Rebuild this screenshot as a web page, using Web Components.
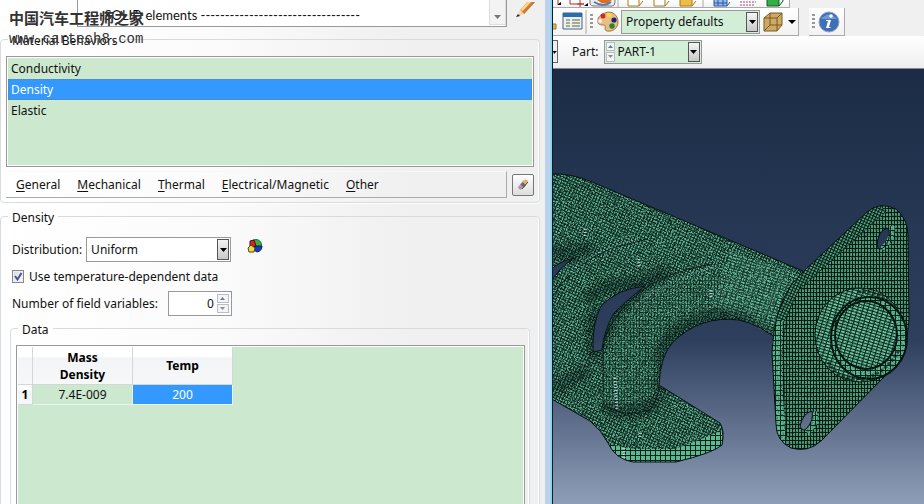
<!DOCTYPE html>
<html lang="en">
<head>
<meta charset="utf-8">
<title>Material editor</title>
<style>
html,body{height:100%}
body{margin:0;overflow:hidden;font:12px/16px "Noto Sans","Open Sans",sans-serif;color:#111;
 --field:#cce8cf;--select:#3399ff;--line:#a9a9a9;--soft:#d5dce0}
</style>
</head>
<body>
<cae-app></cae-app>
<script>
const define=(name,html,setup)=>customElements.define(name,class extends HTMLElement{
  constructor(){
    super();
    const t=document.createElement('template');
    t.innerHTML='<style>*{box-sizing:border-box}button,input,select,textarea{font:inherit;color:inherit;margin:0}:host{display:block}</style>'+html;
    this.attachShadow({mode:'open'}).append(t.content.cloneNode(true));
    if(setup) setup(this,this.shadowRoot);
  }
});
const q=(r,s)=>r.querySelector(s);

/* Titled frame */
define('cae-group',`<style>
fieldset{margin:0;min-width:0;border:1px solid var(--soft);border-radius:4px;padding:var(--pad,0);box-shadow:inset 1px 0 #fff,inset -1px 0 #fff,0 1px #fff}
legend{padding:4px 4px 0;margin-left:var(--legend,2px);line-height:16px}
</style><fieldset><legend></legend><slot></slot></fieldset>`,(h,r)=>{q(r,'legend').textContent=h.getAttribute('title-text')});

/* Drop-down with its label */
define('cae-select',`<style>
:host{display:flex;align-items:center}
label{padding-right:var(--label-gap,4px);white-space:nowrap}label:empty{display:none}
.box{display:grid;grid-template-columns:auto 1fr 12px;width:var(--w);height:var(--h,25px);border:1px solid #999;padding:1px;background:var(--bg,#fff)}
select{grid-area:1/1/2/4;appearance:none;border:0;background:none;width:100%;padding:0 16px 0 var(--text-pad,3px);outline:0;font-size:var(--size,12px)}
.arrow{grid-area:1/3;pointer-events:none;border:1px solid #555;background:linear-gradient(#f4f4f4,#c9c9c9);display:grid;place-items:center}
slot{display:contents}
::slotted(cae-spin){grid-area:1/1;z-index:1}
</style><label for="s"></label><div class="box"><slot></slot><select id="s"><option></option></select><span class="arrow"><svg width="7" height="4"><path d="M0 0h7L3.500 4z"/></svg></span></div>`,(h,r)=>{
  q(r,'label').textContent=h.getAttribute('label')||'';
  q(r,'option').textContent=h.getAttribute('value');
  if(!h.getAttribute('label')) q(r,'select').setAttribute('aria-label',h.getAttribute('name'));
});

define('cae-spin',`<style>
:host{display:flex;flex-direction:column;gap:1px;width:var(--spin,12px)}
button{flex:1;min-height:0;padding:0;border:1px solid #b9bec6;background:#f3f4f6;display:grid;place-items:center}
</style><button aria-label="Increase"><svg width="5" height="3"><path d="M0 3h5L2.500 0z" fill="#6876a5"/></svg></button><button aria-label="Decrease"><svg width="5" height="3"><path d="M0 0h5L2.500 3z" fill="#8a8a8a"/></svg></button>`);

define('cae-check',`<style>
:host,label{display:flex;align-items:center}label{gap:5px}
.b{display:grid;width:12px;height:13px}.b>*{grid-area:1/1}
input{appearance:none;width:12px;height:13px;border:1px solid #888;background:linear-gradient(135deg,#d5d9df,#fff);box-shadow:inset 0 0 0 1px #eee}
svg{pointer-events:none}
</style><label><span class="b"><input type="checkbox" checked><svg width="12" height="13"><path d="M3 6l2.500 3.500L9.500 3" fill="none" stroke="#45549b" stroke-width="2"/></svg></span><slot></slot></label>`);

define('cae-number',`<style>
:host{display:flex;align-items:center;gap:10px}
.box{display:flex;width:64px;height:25px;border:1px solid #999;background:#fff;padding:2px}
input{border:0;background:none;flex:1;min-width:0;text-align:right;padding:0 3px 0 0;outline:0}
</style><label for="n">Number of field variables:</label><div class="box"><input id="n" value="0"><cae-spin></cae-spin></div>`);

define('cae-behaviors',`<style>
div{border:1px solid #999;box-shadow:inset 0 0 0 1px #fff;background:var(--field);height:111px;padding:1px}
button{display:block;width:100%;height:21px;border:0;background:none;text-align:left;padding:0 3px}
[aria-selected=true]{background:var(--select);color:#fff;outline:1px dotted #66809a;outline-offset:-1px}
</style><div role="listbox" aria-label="Material Behaviors"><button role="option">Conductivity</button><button role="option" aria-selected="true">Density</button><button role="option">Elastic</button></div>`);

define('cae-menu',`<style>
:host{display:flex;align-items:center;gap:5px;margin-top:4px}
nav{flex:1;display:flex;gap:17px;height:27px;padding-left:10px;border-right:1px solid #aaa;border-bottom:1px solid #aaa;border-top:1px solid #f8f8f8}
button{border:0;background:none;padding:0;text-underline-offset:2px}
.erase{width:22px;height:22px;border:1px solid #777;border-radius:2px;background:linear-gradient(#fff,#ddd);display:grid;place-items:center}
</style><nav><button><u>G</u>eneral</button><button><u>M</u>echanical</button><button><u>T</u>hermal</button><button><u>E</u>lectrical/Magnetic</button><button><u>O</u>ther</button></nav>
<button class="erase" aria-label="Delete behavior"><svg width="14" height="14"><path d="M2 9L8 2q3-1 4 2l-6 7q-3 2-4-2z" fill="#b992ab"/><path d="M5.500 5L8 2q3-1 4 2L9.500 7.500z" fill="#e6b35e"/><path d="M4.500 6.500l2-2.500 3.500 3-2 2.500z" fill="#666b76"/><path d="M6 11l6-7" stroke="#5b4746"/></svg></button>`);

define('cae-data',`<style>
.box{border:1px solid #999;box-shadow:inset 0 0 0 1px #fff;background:var(--field);padding:1px;min-height:200px}
table{border-collapse:separate;border-spacing:0;table-layout:fixed;width:215px;line-height:17px}
th{font-weight:700;background:linear-gradient(#fff 25%,#f3f4f6 30%,#f6f7f8);border-right:1px solid #d4d6d8;border-bottom:1px solid #d4d6d8;padding:0;color:#000}
thead th{height:38px;padding:0}
td{text-align:center;height:20px;padding:0;border-right:1px solid #e8f5e9;border-bottom:1px solid #e8f5e9}
td.on{background:var(--select);color:#fff}
.n{width:15px}
</style><div class="box"><table><thead><tr><th class="n"></th><th>Mass<br>Density</th><th>Temp</th></tr></thead><tbody><tr><th>1</th><td>7.4E-009</td><td class="on">200</td></tr></tbody></table></div>`);

define('cae-description',`<style>
:host{display:flex;height:29px;padding-left:77px}
.box{flex:1;display:flex;height:27px;border:1px solid #999;border-top:0;background:#fff}
textarea{flex:1;min-width:0;height:24px;resize:none;border:0;outline:0;background:none;padding:7px 0 0 12px;font:13px/16px Lato,sans-serif;overflow:hidden;white-space:pre}
.bar{width:17px;height:25px;border:1px solid #ddd;border-top:0;background:#f3f3f3;padding:15px 0 0 4px}
.pen{border:0;background:none;padding:0;width:33px;height:20px}
svg{display:block}
</style><div class="box"><textarea aria-label="Description">---SOLID elements ---------------------------------</textarea><div class="bar"><svg width="7" height="4"><path d="M0 0h7L3.500 4z" fill="#777"/></svg></div></div>
<button class="pen" aria-label="Edit description"><svg width="33" height="16"><path d="M13 8L22-2h8L17 12z" fill="#eaa94e"/><path d="M15 10L27-2h3L17 12z" fill="#c9783a"/><path d="M13 8l4 4-7 3z" fill="#f4d5a8"/><path d="M11 12l2 2-4 1z" fill="#222"/><path d="M15 8L24-2" stroke="#ffd890" stroke-width="2"/></svg></button>`);

define('cae-editor',`<style>
:host{overflow:hidden;padding-right:4px;background:linear-gradient(90deg,#fff,#fbfbfb 40%,#f0f0f0 75%)}
.first{--pad:7px 5px 4px;--legend:2px;margin-bottom:3px}
.second{--pad:11px 9px 0;--legend:-2px}
.row{display:flex;align-items:flex-start;gap:16px;padding-left:2px}
cae-check{height:29px;padding:0 2px}
cae-number{padding-left:2px;margin-bottom:2px}
.data{--pad:7px 4px 0 5px;--legend:2px}
.color{border:0;background:none;padding:2px 0 0;width:16px}
</style><cae-description></cae-description>
<cae-group class="first" title-text="Material Behaviors"><cae-behaviors></cae-behaviors><cae-menu></cae-menu></cae-group>
<cae-group class="second" title-text="Density"><div class="row"><cae-select label="Distribution:" value="Uniform" style="--w:145px"></cae-select>
<button class="color" aria-label="Create field"><svg width="16" height="15"><circle cx="9" cy="6" r="5.500" fill="#36b33f" stroke="#173"/><path d="M8 7h7q0 5-5 6L7 11z" fill="#1438d8" stroke="#123"/><path d="M3 2l4-1 2 6-6 1z" fill="#d8261c" stroke="#411"/><path d="M1 9l3-3 4 3-1 4-5 0z" fill="#f1de3b" stroke="#442"/></svg></button></div>
<cae-check>Use temperature-dependent data</cae-check><cae-number></cae-number>
<cae-group class="data" title-text="Data"><cae-data></cae-data></cae-group></cae-group>`);

define('cae-watermark',`<style>
:host{position:absolute;left:9px;top:6px;pointer-events:none;color:#333;white-space:nowrap}
p{margin:0}
.cn{font:bold 15px/24px "Noto Sans CJK SC",sans-serif}
.url{font:14px/18px "Liberation Mono",monospace}
</style><p class="cn" lang="zh">中国汽车工程师之家</p><p class="url">www.cartech8.com</p>`);

define('cae-tools',`<style>
:host{background:#f0f0f0}
.r{display:flex;overflow:hidden}
button{border:0;background:none;padding:0;display:block}svg{display:block}
.g{display:flex;align-items:center;border-right:1px solid #aaa;border-bottom:1px solid #aaa;background:linear-gradient(#fff,#f2f2f2)}
.top{height:8px}.top .g{width:237px;height:8px}
.mid{height:28px;gap:10px}.mid .g{height:28px}
.grip{width:3px;height:15px;background:repeating-linear-gradient(#999 0 2px,transparent 2px 4px)}
.low{height:33px;align-items:center;background:linear-gradient(#fff,#eee);border-bottom:1px solid #888;gap:14px;padding-bottom:1px}
.cut{width:5px;height:23px;border:1px solid #666;border-left:0;background:#eee}
.cut svg{margin-top:10px}
.a{--w:139px;--h:24px;--bg:#d3eed7;--size:12px}
.b{--w:98px;--h:24px;--bg:#d3eed7;--text-pad:12px;--label-gap:5px;--spin:9px}
</style>
<div class="r top"><div class="g"><button aria-label="Model tools"><svg width="236" height="8"><g fill="none" stroke="#ad3426"><path d="M5 0v4M17 0v4h14M27 0v7M24 4h7"/></g><path d="M4 5l4-3v3zM31 6l4-3v3z"/><path d="M37 0v4q1 2 4 2h18q3 0 3-4V0" fill="#eee" stroke="#777"/><path d="M44 0q8 7 15 0z" fill="#e36c21"/><path d="M41 2q10 6 17 0" fill="none" stroke="#557cae" stroke-width="2"/><path d="M65 0v7M150 0v7" stroke="#aaa"/><g fill="#fff" stroke="#a97918"><path d="M75-3h11v9H75zM86 6l4-5M101-3h11v9h-11zM112 6l4-5"/><path d="M127-3h12v9h-12z" fill="#edbd49"/><path d="M139 6l4-5"/></g><path d="M161-3h13v9h-13zM165 0v6M170 0v6M161 3h13M174 6l3-4" fill="#97bdec" stroke="#2856a0"/><path d="M187 2h16M187 5h15" stroke="#a34b84" stroke-dasharray="2 1"/><path d="M214-3h12v9h-12zM226 6l4-5V0" fill="#35ae48" stroke="#165b24"/></svg></button></div></div>
<div class="r mid"><div class="g"><button aria-label="Tables"><svg width="37" height="24"><path d="M0 14h3v5H0" fill="#d9b25c" stroke="#9a7b3b"/><path d="M10 3h19v16H10z" fill="#eef1e8" stroke="#496580"/><path d="M10 3h19v4H10z" fill="#286eb1"/><path d="M13 10h4M13 13h4M13 16h4M19 10h8M19 13h8M19 16h8" stroke="#5a6356"/><path d="M33 0v24" stroke="#aaa"/></svg></button><span class="grip"></span>
<button aria-label="Color palette"><svg width="28" height="22"><path d="M12 2c7-3 13 2 13 9 0 6-5 10-11 9-4-1 0-5-3-6-3 0-7 0-6-5 0-3 3-6 7-7z" fill="#e9bd83" stroke="#a87539"/><circle cx="10" cy="5" r="2.500" fill="#c92c20"/><circle cx="16" cy="4" r="2.300" fill="#f2df42"/><circle cx="21" cy="9" r="2.600" fill="#17266f"/><circle cx="19" cy="15" r="2.700" fill="#228738"/><circle cx="7" cy="10" r="2" fill="#efefef"/></svg></button>
<cae-select class="a" name="Color coding" value="Property defaults"></cae-select>
<button aria-label="Wireframe view"><svg width="38" height="24"><path d="M4 8l6-5h12v12l-5 6H4z" fill="#cda967"/><path d="M4 8l6-5h12v12l-5 6H4zM4 8h13v13M17 8l5-5M10 3v12h12M4 21l6-6" fill="none" stroke="#7b5b1c"/><path d="M28 10h8l-4 4z"/></svg></button></div>
<div class="g"><span class="grip" style="margin-left:3px"></span><button aria-label="Information"><svg width="29" height="24"><circle cx="14" cy="12" r="10" fill="#3f6fb5" stroke="#8fa5c8"/><path d="M6 9q8-9 16 0" fill="#6f99d2"/><circle cx="16" cy="6" r="1.800" fill="#fff"/><path d="M11 10h5l-2 7h2l-1 1h-4l2-7h-2z" fill="#fff"/></svg></button></div></div>
<div class="r low"><span class="cut"><svg width="4" height="4"><path d="M0 0h4L1 3z"/></svg></span><cae-select class="b" label="Part:" value="PART-1"><cae-spin></cae-spin></cae-select></div>`);

/* Meshed manifold model */
define('cae-viewport',`<style>
:host{min-height:0;background:linear-gradient(#1c2c47,#22344f 25%,#2d3f5d 62%,#5b6b88 80%,#8f9eb8)}
svg{display:block;width:100%;height:100%}
</style><svg viewBox="553 69 371 435" preserveAspectRatio="xMinYMin slice" role="img" aria-label="Finite element mesh of an exhaust manifold">
<defs>
<pattern id="m1" width="3" height="3" patternUnits="userSpaceOnUse" patternTransform="rotate(25)"><path d="M0 0h3v3H0z" fill="#58b28a"/><path d="M0 .5h3M.5 0v3" stroke="#04150f" stroke-width="1.100"/></pattern>
<pattern id="m2" width="3" height="4" patternUnits="userSpaceOnUse"><path d="M0 0h3v4H0z" fill="#4f9f7b"/><path d="M0 .5h3M.5 0v4" stroke="#06180f"/></pattern>
<pattern id="m3" width="5" height="5" patternUnits="userSpaceOnUse"><path d="M0 0h5v5H0z" fill="#5bb890"/><path d="M0 .5h5M.5 0v5" stroke="#0a2018"/></pattern>
<pattern id="m4" width="5" height="3" patternUnits="userSpaceOnUse" patternTransform="rotate(17)"><path d="M0 0h5v3H0z" fill="#6cc8a0"/><path d="M0 .5h5M.5 0v3" stroke="#0a2018"/></pattern>
<filter id="grain" x="0" y="0" width="1" height="1"><feTurbulence type="fractalNoise" baseFrequency=".7" numOctaves="2" seed="4"/><feColorMatrix values="0 0 0 0 .01  0 0 0 0 .05  0 0 0 0 .04  9 0 0 0 -4.500"/><feComposite in2="SourceGraphic" operator="in"/></filter>
<filter id="glint" x="0" y="0" width="1" height="1"><feTurbulence type="fractalNoise" baseFrequency=".8" numOctaves="2" seed="9"/><feColorMatrix values="0 0 0 0 .2  0 0 0 0 .6  0 0 0 0 .46  0 10 0 0 -5.600"/><feComposite in2="SourceGraphic" operator="in"/></filter>
<filter id="soft" x="-.2" y="-.2" width="1.400" height="1.400"><feGaussianBlur stdDeviation="5"/></filter>
<path id="body" fill-rule="evenodd" d="M550 174Q571 173 592 182L803 271 783 344Q760 324 739 320 701 315 673 342 660 356 659 385L720 423Q725 431 722 445 713 453 676 462H633Q615 459 608 443 602 431 590 421L550 398ZM645 286Q617 289 601 306 592 323 593 352L602 350Q604 330 614 313 627 300 645 286ZM550 270V284Q560 266 574 258 562 260 550 270Z"/>
<path id="plate" fill-rule="evenodd" d="M806 269L867 212Q880 201 896 209 908 219 908 236L909 320Q908 349 890 371L821 441Q808 453 791 448 776 441 776 424L772 352Q774 310 791 285ZM887 228Q878 231 877 245 878 251 883 248 891 241 889 230ZM812 411Q803 413 800 426 803 433 807 428 814 420 812 411Z"/>
<clipPath id="cb"><use href="#body" clip-rule="evenodd"/></clipPath>
<clipPath id="cp"><use href="#plate" clip-rule="evenodd"/></clipPath>
</defs>
<use href="#body" fill="url(#m1)"/>
<path d="M602 350Q606 325 622 307 640 289 673 280L716 276 763 320Q725 308 690 324 661 344 659 385L640 409Q610 415 604 400Z" fill="url(#m2)" opacity=".55"/>
<path d="M730 252L803 276 783 340 713 305Z" fill="url(#m4)" opacity=".7"/>
<use href="#body" filter="url(#glint)" opacity=".7"/>
<use href="#body" filter="url(#grain)" opacity=".8"/>
<path d="M608 443Q615 446 635 449H675L722 431V445Q713 453 676 462H633Q615 459 608 443Z" fill="url(#m3)"/>
<g clip-path="url(#cb)"><g filter="url(#soft)" fill="none" stroke="#010a08" opacity=".6">
<path stroke-width="9" d="M550 250Q575 258 590 246M588 300Q592 285 645 283L668 270M594 360V310M663 395V345Q690 312 740 316L785 345"/>
<path stroke-width="8" d="M603 345Q604 320 640 290M550 390L590 370M605 408Q630 418 660 400"/></g>
<path d="M603 412V350Q606 320 640 292 665 272 712 264M659 385Q658 400 650 410 625 418 604 406M550 300Q570 265 612 248L648 239" fill="none" stroke="#03110d" opacity=".75"/></g>
<use href="#body" fill="none" stroke="#07120f"/>
<g stroke="#c8d9ef" stroke-dasharray="1 2" fill="none" opacity=".85"><path stroke-width="3" d="M615 378L617 410M639 259v9M711 290v8M624 448v12M585 229v7M640 433v6"/><path stroke-width="2" opacity=".5" d="M570 275Q590 250 636 240M636 306Q655 285 718 265"/></g>
<g clip-path="url(#cp)"><path d="M765 200h150v260H765z" fill="url(#m2)"/>
<path d="M776 315Q772 370 780 445" fill="none" stroke="url(#m3)" stroke-width="14"/>
<path d="M776 318L791 285 880 205" fill="none" stroke="url(#m1)" stroke-width="18"/>
<path d="M786 435L783 350Q784 312 799 290L878 218" fill="none" stroke="#03110d" opacity=".6"/></g>
<path d="M892 226q1 14-10 23M814 412q6 9-7 20" fill="none" stroke="url(#m3)" stroke-width="5"/>
<use href="#plate" filter="url(#grain)" opacity=".4"/>
<use href="#plate" fill="none" stroke="#07120f"/>
<ellipse cx="860" cy="335" rx="45" ry="47" fill="url(#m4)" stroke="#07150f"/>
<ellipse cx="869" cy="338" rx="38" ry="41" fill="url(#m3)" stroke="#04110d" stroke-width="2"/>
<ellipse cx="866" cy="335" rx="31" ry="34" fill="url(#m4)" stroke="#04110d" stroke-width="2"/>
<path d="M828 362Q839 382 866 378 886 373 899 350M858 292q18-3 33 13" fill="none" stroke="#06120e" stroke-width="3" stroke-dasharray="3 2" opacity=".7"/>
<ellipse cx="862" cy="335" rx="46" ry="47" filter="url(#grain)" opacity=".4"/>
</svg>`);

define('cae-app',`<style>
:host{display:grid;grid-template-columns:544fr 380fr;height:100vh;overflow:hidden;position:relative}
.view{display:grid;grid-template-rows:auto 1fr;min-width:0;min-height:0;border-left:1px solid #0b1a28}
.right{display:grid;grid-template-columns:8px 1fr;min-width:0;min-height:0}
.frame{background:linear-gradient(90deg,#bcd2ea 0 5px,#7fd6f3 6px);border-left:1px solid #eee}
cae-editor,cae-tools{min-width:0;min-height:0}
</style><cae-editor></cae-editor><div class="right"><div class="frame"></div><div class="view"><cae-tools></cae-tools><cae-viewport></cae-viewport></div></div><cae-watermark></cae-watermark>`);
</script>
</body>
</html>
